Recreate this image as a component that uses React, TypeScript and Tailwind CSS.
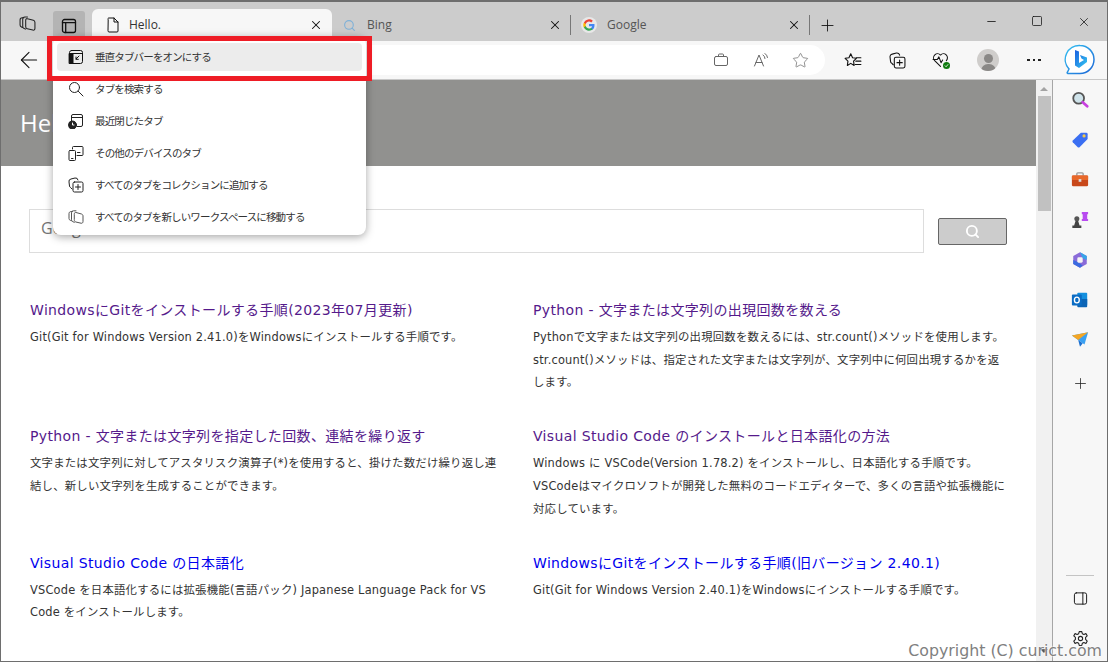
import { ArrowLeft, Minus, Plus, Search, Square, Star, X } from "lucide-react";
import type { ReactNode } from "react";

const titleFont = "font-['DejaVu_Sans','Noto_Sans_CJK_JP',sans-serif]";
const bodyFont = "font-['Open_Sans','Noto_Sans_CJK_JP',sans-serif]";
const textFont = "font-['DejaVu_Sans','Noto_Sans_CJK_JP',sans-serif]";

function Ico({ size = 16, children, className }: { size?: number; children: ReactNode; className?: string }) {
  return (
    <svg
      width={size}
      height={size}
      viewBox="0 0 16 16"
      fill="none"
      stroke="currentColor"
      strokeWidth="1"
      strokeLinecap="round"
      strokeLinejoin="round"
      className={className}
    >
      {children}
    </svg>
  );
}

const WorkspaceIcon = ({ size = 16, className }: { size?: number; className?: string }) => (
  <Ico size={size} className={className}>
    <path d="M4.500 2.600 H3 C1.800 2.600 1 3.400 1 4.600 V9.500 C1 10.500 1.500 11 2.300 11.300 L3.300 11.700" />
    <path d="M8 1.800 H5.500 C4.300 1.800 3.500 2.600 3.500 3.800 V10.800 C3.500 11.800 4 12.400 4.800 12.700 L6.300 13.300" />
    <path d="M6.300 5 C6.300 3.800 7 3.200 8 3.500 L13.500 5 C14.400 5.300 15 6 15 7 V12.500 C15 13.800 14.200 14.500 13 14.200 L7.800 13 C6.900 12.800 6.300 12 6.300 11 Z" />
  </Ico>
);

const VerticalTabsIcon = () => (
  <Ico size={16} className="text-[#111]">
    <rect x="1.500" y="1.500" width="13" height="13" rx="2" strokeWidth="1.300" />
    <path d="M1.500 4.700 H14.500 M4.700 4.700 V14.500" strokeWidth="1.300" />
  </Ico>
);

const DocIcon = () => (
  <Ico size={16} className="text-[#111]">
    <path d="M3 2.500 A1 1 0 0 1 4 1 H9 L13 5 V14 A1 1 0 0 1 12 15 H4 A1 1 0 0 1 3 14 Z" />
    <path d="M9 1 V5 H13" />
  </Ico>
);

const GoogleIcon = () => (
  <div className="flex h-[16px] w-[16px] items-center justify-center rounded-full bg-[#e8e8e8]">
    <svg width="12" height="12" viewBox="0 0 24 24">
      <path fill="#4285F4" d="M23 12.300c0-.8-.1-1.600-.2-2.300H12v4.400h6.200a5.300 5.300 0 0 1-2.300 3.500v2.900h3.700c2.200-2 3.400-5 3.400-8.500z" />
      <path fill="#34A853" d="M12 23.500c3.100 0 5.700-1 7.600-2.800l-3.700-2.900c-1 .7-2.300 1.100-3.900 1.100-3 0-5.500-2-6.400-4.700H1.800v3A11.500 11.500 0 0 0 12 23.500z" />
      <path fill="#FBBC05" d="M5.600 14.200a6.900 6.900 0 0 1 0-4.400v-3H1.800a11.500 11.500 0 0 0 0 10.400z" />
      <path fill="#EA4335" d="M12 5.100c1.700 0 3.200.6 4.400 1.700l3.300-3.300A11.500 11.500 0 0 0 1.800 6.800l3.800 3c.9-2.700 3.400-4.700 6.400-4.700z" />
    </svg>
  </div>
);

const TabClose = () => <X size={14} strokeWidth={1.800} className="text-[#111]" />;

const CollectionsPaths = () => (
  <>
    <path d="M4 12 L2.500 10.500 A2 2 0 0 1 1.500 9 L1 5 A2.500 2.500 0 0 1 3 2 L7 1 A2.500 2.500 0 0 1 10 3" />
    <rect x="5" y="5" width="10" height="10" rx="1.500" />
    <path d="M10 7.500 V12.500 M7.500 10 H12.500" />
  </>
);

function MenuIcon({ kind }: { kind: number }) {
  if (kind === 0)
    return (
      <Ico className="text-[#111]">
        <rect x="1.500" y="1.500" width="13" height="13" rx="2" />
        <path d="M1.500 4.500 H14.500" />
        <rect x="1.500" y="4.500" width="3.500" height="10" fill="currentColor" />
        <path d="M11 7 L8 10 M8 8 V10.300 H10.300" />
      </Ico>
    );
  if (kind === 1)
    return (
      <Ico className="text-[#222]">
        <circle cx="6.500" cy="6.500" r="5" />
        <path d="M10.200 10.200 L15 15" />
      </Ico>
    );
  if (kind === 2)
    return (
      <Ico className="text-[#222]">
        <path d="M3.500 8 V3 A1.500 1.500 0 0 1 5 1.500 H13 A1.500 1.500 0 0 1 14.500 3 V12 A1.500 1.500 0 0 1 13 13.500 H9" />
        <path d="M3.500 4.500 H14.500" />
        <circle cx="4.500" cy="12" r="4" fill="currentColor" />
        <path d="M4.500 10 V12 H6" stroke="#fff" />
      </Ico>
    );
  if (kind === 3)
    return (
      <Ico className="text-[#222]">
        <path d="M4.500 4 V2.500 A1 1 0 0 1 5.500 1.500 H14 A1 1 0 0 1 15 2.500 V9.500 A1 1 0 0 1 14 10.500 H9" />
        <rect x="1" y="5.500" width="6.500" height="10" rx="1" />
        <path d="M3.500 13.500 H5 M9.500 7.500 H12" />
      </Ico>
    );
  if (kind === 4)
    return (
      <Ico className="text-[#222]">
        <CollectionsPaths />
      </Ico>
    );
  return <WorkspaceIcon className="text-[#555]" />;
}

const menuItems = [
  "垂直タブバーをオンにする",
  "タブを検索する",
  "最近閉じたタブ",
  "その他のデバイスのタブ",
  "すべてのタブをコレクションに追加する",
  "すべてのタブを新しいワークスペースに移動する",
];

function Article({ title, color, children }: { title: string; color: string; children: ReactNode }) {
  return (
    <div>
      <h2 className={`${titleFont} ${color} text-[14px] leading-[20px] tracking-[0.35px] whitespace-nowrap`}>{title}</h2>
      <p className={`${textFont} mt-[6px] text-[11.400px] leading-[22.700px] tracking-[0.2px] text-[#333] whitespace-nowrap`}>{children}</p>
    </div>
  );
}

const sideIcons = [
  <svg key="s" width="18" height="18" viewBox="0 0 20 20">
    <circle cx="8.500" cy="8" r="6" fill="#cfe3ea" stroke="#555" strokeWidth="2" />
    <path d="M13 12.500 L18 17" stroke="#c83fe0" strokeWidth="3" strokeLinecap="round" />
  </svg>,
  <svg key="t" width="18" height="18" viewBox="0 0 20 20">
    <path d="M11 2 H17 A1.500 1.500 0 0 1 18.500 3.500 V9 L9.500 18 A1.500 1.500 0 0 1 7.500 18 L2 12.500 A1.500 1.500 0 0 1 2 10.500 Z" fill="#3b6ff2" />
    <circle cx="14.500" cy="5.500" r="1.800" fill="#f4c94a" />
  </svg>,
  <svg key="b" width="18" height="18" viewBox="0 0 20 20">
    <path d="M6.500 5 V3 A1 1 0 0 1 7.500 2 H12.500 A1 1 0 0 1 13.500 3 V5" fill="none" stroke="#999" strokeWidth="1.500" />
    <rect x="1" y="5" width="18" height="12" rx="1.500" fill="#c8481a" />
    <rect x="1" y="5" width="18" height="5" rx="1" fill="#e8682a" />
    <rect x="8.500" y="9" width="3" height="3" fill="#ddd" />
  </svg>,
  <svg key="c" width="18" height="18" viewBox="0 0 20 20">
    <path d="M12 1 H19 V3.500 H18 V9 H19 V11 H12 V9 H13 V3.500 H12 Z" fill="#b84bf0" />
    <circle cx="6.500" cy="8.500" r="2.800" fill="#555" />
    <path d="M5 11 H8 L9.500 16 H11.500 V19 H1.500 V16 H3.500 Z" fill="#444" />
  </svg>,
  <svg key="o" width="18" height="18" viewBox="0 0 20 20">
    <path d="M10 1.500 L17.500 5.500 V14.500 L10 18.500 L2.500 14.500 V5.500 Z" fill="#8a6bd8" />
    <path d="M10 1.500 L17.500 5.500 V10 L13 8 Z" fill="#35a5e8" />
    <path d="M2.500 10 V14.500 L10 18.500 L13 16 L7 12 Z" fill="#3a6be0" />
    <rect x="7" y="7" width="6" height="6" rx="1.500" fill="#f5f5f5" />
  </svg>,
  <svg key="m" width="18" height="18" viewBox="0 0 20 20">
    <rect x="7" y="2" width="11" height="14" rx="1" fill="#1490df" />
    <path d="M7 9 L18 9 V17 A1 1 0 0 1 17 18 H8 A1 1 0 0 1 7 17 Z" fill="#0c64b5" />
    <rect x="1" y="4" width="11" height="12" rx="1" fill="#0a6cc4" />
    <ellipse cx="6.500" cy="10" rx="2.700" ry="3.200" fill="none" stroke="#fff" strokeWidth="1.500" />
  </svg>,
  <svg key="p" width="18" height="18" viewBox="0 0 20 20">
    <path d="M1 5 L19 1.500 L15 15 L8 10 Z" fill="#39a0f2" />
    <path d="M1 5 L19 1.500 L8 10 Z" fill="#f5a623" />
    <path d="M8 10 L10 17.500 L13 13.500 Z" fill="#1b6fd0" />
  </svg>,
];

export default function App() {
  return (
    <div className={`relative flex h-[662px] w-[1108px] flex-col overflow-hidden border border-t-2 border-[#6e6e6e] bg-white ${bodyFont}`}>
      {/* title bar */}
      <div className="flex h-[39px] shrink-0 items-end bg-[#cccccc]">
        <div className="flex h-[32px] w-[52px] items-center justify-center pb-[3px] pl-[1px] text-[#222]">
          <WorkspaceIcon size={17} />
        </div>
        <div className="flex h-[30px] w-[32px] items-center justify-center rounded-t-[3px] bg-[#b4b4b4]">
          <VerticalTabsIcon />
        </div>
        <div className="ml-[7px] flex h-[32px] w-[240px] items-center rounded-t-[6px] bg-[#f7f7f7] pl-[13px] pr-[9px]">
          <DocIcon />
          <span className="ml-[8px] flex-1 text-[12px] text-[#333]">Hello.</span>
          <TabClose />
        </div>
        <div className="flex h-[32px] w-[238px] items-center pl-[11px] pr-[8px]">
          <Search size={13} strokeWidth={2} className="text-[#7fb1d8]" />
          <span className="ml-[11px] flex-1 text-[12px] text-[#555]">Bing</span>
          <TabClose />
        </div>
        <span className="mb-[6px] h-[20px] w-px bg-[#777]" />
        <div className="flex h-[32px] w-[238px] items-center pl-[10px] pr-[8px]">
          <GoogleIcon />
          <span className="ml-[10px] flex-1 text-[12px] text-[#555]">Google</span>
          <TabClose />
        </div>
        <span className="mb-[6px] h-[20px] w-px bg-[#777]" />
        <div className="flex h-[32px] items-center pl-[8px]">
          <Plus size={19} strokeWidth={1.100} className="text-[#111]" />
        </div>
        <div className="ml-auto flex h-[39px] self-start pt-[13px] pr-[16px] text-[#111]">
          <Minus size={13} strokeWidth={1.500} className="mr-[33px]" />
          <Square size={12} strokeWidth={1.500} className="mr-[34px]" />
          <X size={14} strokeWidth={1.300} />
        </div>
      </div>

      {/* toolbar */}
      <div className="flex h-[39px] shrink-0 items-center border-b border-[#c8c8c8] bg-[#f7f7f7]">
        <ArrowLeft size={26} strokeWidth={1} className="ml-[15px] text-[#111]" />
        <div className="ml-[8px] flex h-[30px] w-[775px] items-center justify-end rounded-r-[15px] bg-white text-[#666]">
          <Ico size={16} className="mr-[24px]">
            <rect x="1.500" y="4.500" width="13" height="9" rx="1.500" />
            <path d="M5.500 4.500 V3 A1 1 0 0 1 6.500 2 H9.500 A1 1 0 0 1 10.500 3 V4.500" />
          </Ico>
          <Ico size={16} className="mr-[23px]">
            <path d="M1.500 14 L6 3 L10.500 14 M3 10.500 H9" />
            <path d="M10 3 A4 4 0 0 1 12 6.500 M12 1.500 A6 6 0 0 1 14.500 5.500" />
          </Ico>
          <Star size={17} strokeWidth={1} className="mr-[16px]" />
        </div>
        <div className="flex items-center text-[#111]">
          <Ico size={18} className="ml-[19px]">
            <path d="M7 1.500 L8.600 5 L12 5.500 L9.500 8 L10 11.800 L7 10 L4 11.800 L4.500 8 L2 5.500 L5.400 5 Z" transform="translate(-1 1)" />
            <path d="M11 6 H15 M10.500 9 H15 M10 12 H15" />
          </Ico>
          <Ico size={17} className="ml-[27px]">
            <CollectionsPaths />
          </Ico>
          <div className="relative ml-[26px] h-[18px] w-[18px]">
            <Ico size={17}>
              <path d="M8 14.500 L2.500 9 A3.600 3.600 0 0 1 8 3.800 A3.600 3.600 0 0 1 13.500 9" />
              <path d="M1 8 H5 L6.500 5.500 L8.500 11 L10 8.500" />
            </Ico>
            <span className="absolute bottom-[0px] right-[0px] flex h-[7px] w-[7px] items-center justify-center rounded-full bg-[#107c10]">
              <svg width="5" height="5" viewBox="0 0 6 6">
                <path d="M1 3 L2.500 4.500 L5 1.500" fill="none" stroke="#fff" strokeWidth="1" />
              </svg>
            </span>
          </div>
          <div className="ml-[27px] flex h-[22px] w-[22px] flex-col items-center justify-end overflow-hidden rounded-full bg-[#cfcdcb]">
            <span className="h-[9px] w-[9px] rounded-full bg-[#8a8886]" />
            <span className="mt-[1px] h-[7px] w-[15px] rounded-t-full bg-[#8a8886]" />
          </div>
          <div className="ml-[28px] flex gap-[3px]">
            <span className="h-[2px] w-[2.500px] bg-[#222]" />
            <span className="h-[2px] w-[2.500px] bg-[#222]" />
            <span className="h-[2px] w-[2.500px] bg-[#222]" />
          </div>
        </div>
      </div>

      <div className="flex min-h-0 flex-1">
        {/* page */}
        <div className="w-[1035px] overflow-hidden">
          <div className={`flex h-[86px] items-center bg-[#91918f] pl-[19px] text-[24px] text-white ${bodyFont}`}>Hello.</div>
          <div className="ml-[28px] mt-[43px] flex items-center">
            <div className="flex h-[44px] w-[895px] items-center border border-[#dddddd] pb-[6px] pl-[11px] text-[16px] font-medium text-[#757575]">Google</div>
            <button className="ml-[14px] flex h-[27px] w-[69px] items-center justify-center rounded-[2px] border border-[#666] bg-[#cccccc] text-white">
              <Search size={15} strokeWidth={3} />
            </button>
          </div>
          <div className="ml-[29px] mt-[47px] grid grid-cols-[503px_1fr] auto-rows-[126.300px]">
            <Article title="WindowsにGitをインストールする手順(2023年07月更新)" color="text-[#551a8b]">
              Git(Git for Windows Version 2.41.0)をWindowsにインストールする手順です。
            </Article>
            <Article title="Python - 文字または文字列の出現回数を数える" color="text-[#551a8b]">
              Pythonで文字または文字列の出現回数を数えるには、str.count()メソッドを使用します。
              <br />
              str.count()メソッドは、指定された文字または文字列が、文字列中に何回出現するかを返
              <br />
              します。
            </Article>
            <Article title="Python - 文字または文字列を指定した回数、連結を繰り返す" color="text-[#551a8b]">
              文字または文字列に対してアスタリスク演算子(*)を使用すると、掛けた数だけ繰り返し連
              <br />
              結し、新しい文字列を生成することができます。
            </Article>
            <Article title="Visual Studio Code のインストールと日本語化の方法" color="text-[#551a8b]">
              Windows に VSCode(Version 1.78.2) をインストールし、日本語化する手順です。
              <br />
              VSCodeはマイクロソフトが開発した無料のコードエディターで、多くの言語や拡張機能に
              <br />
              対応しています。
            </Article>
            <Article title="Visual Studio Code の日本語化" color="text-[#0000ee]">
              VSCode を日本語化するには拡張機能(言語パック) Japanese Language Pack for VS
              <br />
              Code をインストールします。
            </Article>
            <Article title="WindowsにGitをインストールする手順(旧バージョン 2.40.1)" color="text-[#0000ee]">
              Git(Git for Windows Version 2.40.1)をWindowsにインストールする手順です。
            </Article>
          </div>
        </div>

        {/* scrollbar */}
        <div className="flex w-[17px] shrink-0 flex-col items-center border-r border-[#a6a6a6] bg-[#f1f1f1]">
          <span className="mt-[7px] h-0 w-0 border-x-[4px] border-b-[4px] border-x-transparent border-b-[#a3a3a3]" />
          <span className="mt-[5px] h-[115px] w-[13px] bg-[#c1c1c1]" />
          <span className="mt-auto mb-[8px] h-0 w-0 border-x-[4px] border-t-[4px] border-x-transparent border-t-[#505050]" />
        </div>

        {/* sidebar */}
        <div className="relative flex min-w-0 flex-1 flex-col items-center bg-[#f7f7f7]">
          <div className="mt-[11px] flex flex-col items-center gap-[22px]">
            {sideIcons}
          </div>
          <Plus size={17} strokeWidth={1.100} className="mt-[26px] text-[#222]" />
          <div className="mt-auto h-px w-[28px] bg-[#c4c4c4]" />
          <Ico size={15} className="mt-[15px] text-[#111]">
            <rect x="1.500" y="2" width="13" height="12" rx="2" />
            <path d="M10.500 2 V14" />
          </Ico>
          <Ico size={17} className="mb-[14px] mt-[24px] text-[#222]">
            <path d="M6.800 1.500 H9.200 L9.700 3.500 L11.200 4.200 L13.100 3.400 L14.300 5.500 L12.800 6.900 V8.900 L14.300 10.500 L13.100 12.600 L11.200 11.800 L9.700 12.500 L9.200 14.500 H6.800 L6.300 12.500 L4.800 11.800 L2.900 12.600 L1.700 10.500 L3.200 8.900 V6.900 L1.700 5.500 L2.900 3.400 L4.800 4.200 L6.300 3.500 Z" />
            <circle cx="8" cy="8" r="2" />
          </Ico>
          {/* bing button */}
          <svg width="32" height="32" viewBox="0 0 32 32" className="absolute left-[11px] top-[-36px]">
            <defs>
              <linearGradient id="bingRing" x1="0" y1="0" x2="1" y2="1">
                <stop offset="0" stopColor="#35c1f1" />
                <stop offset="1" stopColor="#1b66d6" />
              </linearGradient>
              <linearGradient id="bingB" x1="0" y1="0" x2="1" y2="1">
                <stop offset="0" stopColor="#1a5fe0" />
                <stop offset="1" stopColor="#35c8f0" />
              </linearGradient>
            </defs>
            <path d="M16 1.500 A14 14 0 0 1 16 29.500 H4 C3 29.500 3 28.500 3.500 28 L5 25 A14 14 0 0 1 16 1.500 Z" fill="#fff" stroke="url(#bingRing)" strokeWidth="1.500" />
            <path d="M11 6 L15 7.500 V19 L20 16 L17.500 14.500 L16 11 L23 13.500 V18 L15 24 L11 21.500 Z" fill="url(#bingB)" />
          </svg>
        </div>
      </div>

      {/* tab actions menu */}
      <div className="absolute left-[52px] top-[34px] flex h-[199px] w-[313px] flex-col gap-[4px] rounded-[8px] bg-white p-[4px] pt-[7px] shadow-[0_2px_8px_rgba(0,0,0,0.35)]">
        {menuItems.map((label, i) => (
          <div key={label} className={`flex h-[28px] shrink-0 items-center rounded-[4px] pl-[11px] ${i === 0 ? "bg-[#ececec]" : ""}`}>
            <MenuIcon kind={i} />
            <span className="ml-[11px] font-['Noto_Sans_CJK_JP',sans-serif] text-[10.500px] tracking-[-0.85px] text-[#333]">{label}</span>
          </div>
        ))}
      </div>

      {/* red callout */}
      <div className="absolute left-[46px] top-[34px] h-[45px] w-[325px] border-[5px] border-[#ee1c25]" />

      {/* watermark */}
      <div className="absolute bottom-[0px] right-[5px] text-[15.800px] leading-[20px] text-[#808080] font-['DejaVu_Sans',sans-serif] [text-shadow:0_0_2px_#fff,0_0_2px_#fff]">
        Copyright (C) curict.com
      </div>
    </div>
  );
}
